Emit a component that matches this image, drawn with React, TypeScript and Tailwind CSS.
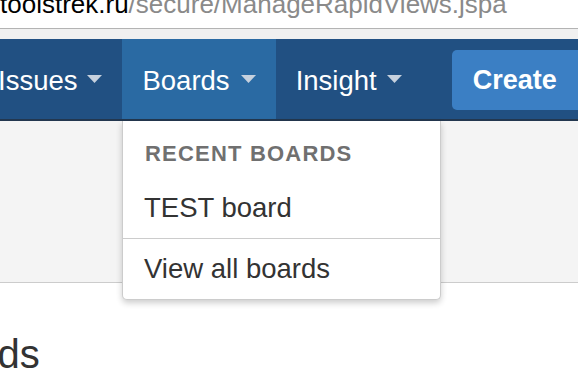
import React from "react";

function Caret() {
  return (
    <svg width="15" height="8" viewBox="0 0 15 8" className="block">
      <path d="M0 0 L15 0 L7.5 8 Z" fill="#c6d1de" />
    </svg>
  );
}

function NavItem({ label, active }: { label: string; active?: boolean }) {
  return (
    <div
      className={
        active
          ? "flex items-center h-full px-[20px] gap-[11px] bg-[#2a6aa3]"
          : "flex items-center h-full px-[20px] gap-[10px]"
      }
    >
      <span className="pt-[3px] text-[27.5px] leading-[32px] text-white">{label}</span>
      <Caret />
    </div>
  );
}

export default function App() {
  return (
    <div
      className="relative w-[578px] h-[386px] overflow-hidden bg-white"
      style={{ fontFamily: '"Liberation Sans", Arial, sans-serif' }}
    >
      {/* Address bar */}
      <div className="h-[29px] overflow-hidden border-b border-[#b3b3b3] bg-white">
        <div className="mt-[-9px] text-[26px] leading-[26px] whitespace-nowrap">
          <span className="text-black">toolstrek.ru</span>
          <span className="text-[#8a8a8a]">/secure/ManageRapidViews.jspa</span>
        </div>
      </div>
      <div className="h-[10px] bg-[#f0f0f0]" />

      {/* Navigation */}
      <nav className="flex items-center h-[82px] bg-[#215082] border-b-2 border-[#23374f]">
        <div className="flex items-center h-full ml-[-22px]">
          <NavItem label="Issues" />
          <NavItem label="Boards" active />
          <NavItem label="Insight" />
        </div>
        <button className="ml-[30px] mt-[2px] h-[60px] pl-[21px] pr-[30px] rounded-[5px] bg-[#3b7fc4] text-white font-bold text-[27px] leading-[32px] whitespace-nowrap">
          Create
        </button>
      </nav>

      {/* Page header area */}
      <div className="h-[162px] bg-[#f4f4f4] border-b border-[#cccccc]" />

      {/* Page content */}
      <h1 className="mt-[47px] ml-[-87px] text-[40px] leading-[48px] text-[#333333] whitespace-nowrap">
        Boards
      </h1>

      {/* Boards dropdown */}
      <div className="absolute top-[121px] left-[122px] w-[319px] bg-white border border-t-0 border-[#cccccc] rounded-b-[5px] shadow-[0_3px_6px_rgba(0,0,0,0.2)]">
        <div className="pt-[20px] pb-[12px] px-[22px]">
          <div className="text-[22px] leading-[25px] font-bold text-[#707070] tracking-[1.2px] whitespace-nowrap">
            RECENT BOARDS
          </div>
        </div>
        <div className="px-[21px] py-[14px] text-[27.5px] leading-[32px] text-[#333333] whitespace-nowrap">
          TEST board
        </div>
        <div className="border-t border-[#cccccc] px-[21px] py-[14px] text-[27.5px] leading-[32px] text-[#333333] whitespace-nowrap">
          View all boards
        </div>
      </div>
    </div>
  );
}
